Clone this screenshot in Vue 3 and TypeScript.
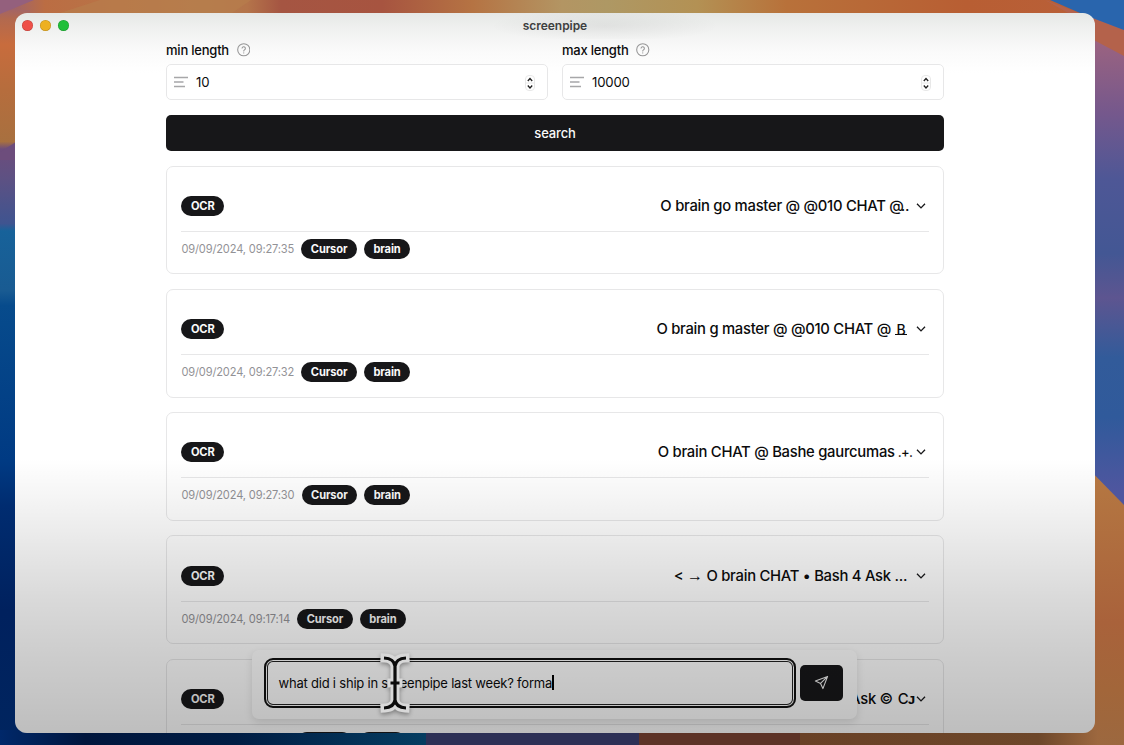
<script setup lang="ts">
interface Field {
  label: string
  value: string
}

interface Result {
  lead?: string
  title: string
  tail?: string
  tailKind?: string
  end: number
  date: string
  tags: string[]
}

const fields: Field[] = [
  { label: 'min length', value: '10' },
  { label: 'max length', value: '10000' },
]

const results: Result[] = [
  { title: 'O brain go master @ @010 CHAT @', tail: '..', tailKind: 'dots', end: 7, date: '09/09/2024, 09:27:35', tags: ['Cursor', 'brain'] },
  { title: 'O brain g master @ @010 CHAT @', tail: 'B', tailKind: 'slab', end: 9, date: '09/09/2024, 09:27:32', tags: ['Cursor', 'brain'] },
  { title: 'O brain CHAT @ Bashe gaurcumas', tail: '.+.', tailKind: 'plus', end: 4, date: '09/09/2024, 09:27:30', tags: ['Cursor', 'brain'] },
  { lead: '→', title: ' O brain CHAT • Bash 4 Ask ...', end: 9, date: '09/09/2024, 09:17:14', tags: ['Cursor', 'brain'] },
  { title: 'O brain CHAT • Bash 4 Ask ©', tail: 'Cᴊ', tailKind: 'cut', end: 2, date: '09/09/2024, 09:17:12', tags: ['Cursor', 'brain'] },
]
</script>

<template>
  <div class="desktop">
    <svg class="wallpaper" viewBox="0 0 1124 745" preserveAspectRatio="none">
      <defs>
        <linearGradient id="top" x1="0" x2="1" y1="0" y2="0">
          <stop offset="0" stop-color="#94607a" />
          <stop offset=".04" stop-color="#bb6d43" />
          <stop offset=".18" stop-color="#b57b4c" />
          <stop offset=".22" stop-color="#b4744a" />
          <stop offset=".25" stop-color="#a55542" />
          <stop offset=".34" stop-color="#a75440" />
          <stop offset=".42" stop-color="#b57343" />
          <stop offset=".5" stop-color="#b39563" />
          <stop offset=".54" stop-color="#ae9864" />
          <stop offset=".62" stop-color="#b39154" />
          <stop offset=".7" stop-color="#b8713a" />
          <stop offset=".86" stop-color="#b85e33" />
          <stop offset="1" stop-color="#b9603a" />
        </linearGradient>
        <linearGradient id="left" x1="0" x2="0" y1="0" y2="745" gradientUnits="userSpaceOnUse">
          <stop offset="0" stop-color="#94607d" />
          <stop offset=".025" stop-color="#b2694f" />
          <stop offset=".06" stop-color="#c86c3d" />
          <stop offset=".12" stop-color="#b66d3d" />
          <stop offset=".19" stop-color="#a8703f" />
          <stop offset=".2" stop-color="#6d4d7c" />
          <stop offset=".24" stop-color="#5d5183" />
          <stop offset=".3" stop-color="#3f5490" />
          <stop offset=".31" stop-color="#17629a" />
          <stop offset=".39" stop-color="#195b92" />
          <stop offset=".41" stop-color="#074b8c" />
          <stop offset=".62" stop-color="#003a83" />
          <stop offset=".68" stop-color="#002c70" />
          <stop offset=".82" stop-color="#00215e" />
          <stop offset="1" stop-color="#00255f" />
        </linearGradient>
        <linearGradient id="right" x1="0" x2="0" y1="0" y2="745" gradientUnits="userSpaceOnUse">
          <stop offset="0" stop-color="#2965ad" />
          <stop offset=".055" stop-color="#9b6380" />
          <stop offset=".15" stop-color="#76588c" />
          <stop offset=".24" stop-color="#4e5796" />
          <stop offset=".34" stop-color="#435794" />
          <stop offset=".4" stop-color="#5d5590" />
          <stop offset=".48" stop-color="#325b9a" />
          <stop offset=".56" stop-color="#305a9b" />
          <stop offset=".66" stop-color="#4f569f" />
        </linearGradient>
        <linearGradient id="rightWarm" x1="0" x2="0" y1="470" y2="745" gradientUnits="userSpaceOnUse">
          <stop offset="0" stop-color="#b57842" />
          <stop offset=".55" stop-color="#a9623b" />
          <stop offset=".8" stop-color="#a2663a" />
          <stop offset="1" stop-color="#9c683f" />
        </linearGradient>
        <linearGradient id="bottomBlue" x1="0" x2="1" y1="0" y2="0">
          <stop offset="0" stop-color="#00286a" />
          <stop offset=".2" stop-color="#00163d" />
          <stop offset=".55" stop-color="#001d44" />
          <stop offset="1" stop-color="#053d61" />
        </linearGradient>
        <linearGradient id="bottomWarm" x1="0" x2="1" y1="0" y2="0">
          <stop offset="0" stop-color="#694126" />
          <stop offset=".8" stop-color="#6d472a" />
          <stop offset="1" stop-color="#9d683f" />
        </linearGradient>
      </defs>
      <rect width="1124" height="20" fill="url(#top)" />
      <path d="M100 0H251L232 13H60Z" fill="#b77e4d" opacity=".6" />
      <rect y="10" width="30" height="735" fill="url(#left)" />
      <path d="M0 0H34L0 14Z" fill="#94607d" />
      <path d="M0 152L16 142V160H0Z" fill="#6d4d7c" />
      <rect x="1080" y="12" width="44" height="500" fill="url(#right)" />
      <path d="M1045 0L1124 30V56L1090 38V14H1070Z" fill="#b4624b" />
      <path d="M1050 0H1124V30L1080 13Z" fill="#2965ad" />
      <path d="M1080 460L1124 505V745H1080Z" fill="url(#rightWarm)" />
      <rect y="730" width="427" height="15" fill="url(#bottomBlue)" />
      <rect x="426" y="730" width="214" height="15" fill="#2d3056" />
      <rect x="639" y="730" width="162" height="15" fill="#5d3327" />
      <rect x="800" y="730" width="298" height="15" fill="url(#bottomWarm)" />
    </svg>

    <main class="window">
      <header class="titlebar">
        <div class="lights">
          <i class="light red"></i><i class="light yellow"></i><i class="light green"></i>
        </div>
        <span class="app-name">screenpipe</span>
      </header>

      <section class="content">
        <div class="fields">
          <div v-for="field in fields" :key="field.label" class="field">
            <div class="label">
              <span class="label-text">{{ field.label }}</span>
              <svg class="help" viewBox="0 0 24 24">
                <circle cx="12" cy="12" r="10.8" />
                <path d="M9 9a3 3 0 0 1 5.9 1c0 2-2.9 2.4-2.9 4M12 17.4v.3" />
              </svg>
            </div>
            <div class="input">
              <svg class="lines" viewBox="0 0 14 12"><path d="M0 1.5H14M0 6H9.5M0 10.5H11" /></svg>
              <span class="value">{{ field.value }}</span>
              <svg class="stepper" viewBox="0 0 10 16">
                <rect x=".5" y=".5" width="9" height="15" rx="3.5" />
                <path class="rule" d="M.5 8H9.5" />
                <path class="arrow" d="M2.800 6L5 3.500L7.200 6M2.800 10.500L5 13L7.200 10.500" />
              </svg>
            </div>
          </div>
        </div>

        <button class="search">search</button>

        <article v-for="item in results" :key="item.date" class="card">
          <div class="summary">
            <span class="pill">OCR</span>
            <div class="heading">
              <span class="title"><template v-if="item.lead">&lt; <span class="arrow-glyph">{{ item.lead }}</span></template>{{ item.title }}</span>
              <span v-if="item.tail" class="tail" :class="item.tailKind">{{ item.tail }}</span>
              <svg class="chevron" viewBox="0 0 10 6" :style="{ marginLeft: item.end + 'px' }"><path d="M1 .7L5 4.9L9 .7" /></svg>
            </div>
          </div>
          <div class="meta">
            <time>{{ item.date }}</time>
            <span v-for="tag in item.tags" :key="tag" class="pill">{{ tag }}</span>
          </div>
        </article>
      </section>

      <div class="composer">
        <div class="prompt"><span class="prompt-text">what did i ship in screenpipe last week? forma</span><i class="caret"></i></div>
        <button class="send">
          <svg viewBox="0 0 16 16"><path d="M14.5 1.5L1.5 6.5L7 9L9.5 14.5ZM14.5 1.5L7 9" /></svg>
        </button>
      </div>

      <div class="shade"></div>

      <svg class="cursor" viewBox="0 0 32 58">
        <path class="outline" d="M6 4Q15 4.500 16 12Q17 4.500 26 4M16 11V47M6 54Q15 53.500 16 46Q17 53.500 26 54" />
        <path class="outline" d="M13 29H19" />
        <path class="core" d="M5 4Q15 4.500 16 12Q17 4.500 27 4M16 11V47M5 54Q15 53.500 16 46Q17 53.500 27 54M11.500 29H20.500" />
      </svg>
    </main>
  </div>
</template>

<style>
body { margin: 0; overflow: hidden; }
</style>

<style scoped>
* { box-sizing: border-box; }
.desktop {
  position: relative;
  width: 1124px;
  height: 745px;
  padding: 13px 29px 12px 15px;
  overflow: hidden;
  background: #194f87;
  font-family: Inter, "Liberation Sans", sans-serif;
  color: #0b0b0c;
}
.wallpaper { position: absolute; inset: 0; width: 100%; height: 100%; }
.window {
  position: relative;
  width: 1080px;
  height: 720px;
  border-radius: 12px;
  overflow: hidden;
  background: linear-gradient(#e6e8e6 0, #f1f2f1 18px, #fafafa 38px, #fff 60px);
}
.desktop::before {
  content: "";
  position: absolute;
  left: 15px;
  top: 24px;
  width: 1080px;
  height: 709px;
  border-radius: 12px;
  box-shadow: 0 0 10px rgba(0, 0, 0, .28);
}
.titlebar {
  height: 26px;
  padding-bottom: 1px;
  display: grid;
  grid-template-columns: 100px 1fr 100px;
  align-items: center;
  background: radial-gradient(ellipse 115px 16px at 590px 13px, rgba(0, 0, 0, .06), transparent);
}
.lights { display: flex; gap: 7px; padding-left: 7px; }
.light { width: 11px; height: 11px; border-radius: 50%; box-shadow: inset 0 0 0 .5px rgba(0, 0, 0, .2); }
.red { background: #ee5048; }
.yellow { background: #edb021; }
.green { background: #1fbf38; }
.app-name { text-align: center; font-size: 12px; font-weight: 600; color: #3e3f3f; letter-spacing: -.05px; }
.content { width: 778px; margin: 0 auto 0 151px; }
.fields { display: grid; grid-template-columns: 1fr 1fr; gap: 14px; }
.label { height: 26px; padding-top: 2px; display: flex; align-items: center; gap: 8px; margin-top: -3px; margin-bottom: 3px; }
.label-text { font-size: 13px; font-weight: 550; letter-spacing: -.22px; }
.help { width: 13.5px; height: 13.5px; fill: none; stroke: #969697; stroke-width: 1.9; stroke-linecap: round; }
.input {
  height: 36px;
  margin-top: -1px;
  display: flex;
  align-items: center;
  border: 1px solid #e7e7e8;
  border-radius: 5px;
  background: #fff;
  padding: 0 12.5px 0 7px;
}
.lines { width: 14px; height: 12px; fill: none; stroke: #a7a7a9; stroke-width: 1.3; }
.value { margin-left: 8px; flex: 1; font-size: 13.2px; letter-spacing: -.2px; }
.stepper { width: 10px; height: 16px; margin-top: 1px; fill: none; }
.stepper rect, .rule { stroke: #e8e8e8; stroke-width: 1; }
.arrow { stroke: #222; stroke-width: 1.3; }
.search {
  display: block;
  width: 100%;
  height: 36px;
  margin: 15px 0 14.5px;
  padding: 0;
  border: 0;
  border-radius: 5px;
  background: #171719;
  color: #fafafa;
  font: 550 13px Inter, sans-serif;
  letter-spacing: -.15px;
}
.card {
  height: 108.8px;
  margin-bottom: 14.5px;
  padding: 29.4px 14.3px 0 14.4px;
  border: 1px solid #e7e7e8;
  border-radius: 7px;
}
.summary { height: 36px; display: flex; justify-content: space-between; align-items: flex-start; border-bottom: 1px solid #e7e7e8; }
.pill {
  height: 20px;
  display: inline-flex;
  align-items: center;
  padding: 0 9.5px;
  border-radius: 10px;
  background: #171719;
  color: #fafafa;
  font-size: 11.1px;
  font-weight: 700;
  letter-spacing: -.12px;
}
.heading { height: 20px; display: flex; align-items: center; padding-right: 3px; font-size: 14.8px; font-weight: 550; white-space: pre; }
.title { letter-spacing: -.26px; }
.arrow-glyph { font-family: "Liberation Sans", sans-serif; font-size: 16px; line-height: 1; }
.chevron { width: 10px; height: 6px; fill: none; stroke: #171719; stroke-width: 1.3; margin-right: -.5px; }
.dots { margin-left: -3px; letter-spacing: -.2px; }
.slab { margin-left: 4px; padding: 0 1.5px; font-size: 14px; line-height: 11px; height: 11px; border-bottom: 1.5px solid currentColor; }
.plus { margin-left: 3px; font-size: 13px; letter-spacing: -.7px; }
.cut { margin-left: 5px; letter-spacing: -1px; }
.meta { height: 34px; display: flex; align-items: center; gap: 7.2px; }
time { font-size: 11.1px; color: #929296; letter-spacing: -.15px; }
.composer {
  position: absolute;
  left: 237px;
  top: 637px;
  width: 605px;
  height: 69px;
  display: flex;
  align-items: center;
  gap: 4px;
  padding: 0 14px 4px 12px;
  border-radius: 7px;
  background: #fff;
  box-shadow: 0 3px 8px rgba(0, 0, 0, .12);
}
.prompt {
  width: 532px;
  height: 50px;
  display: flex;
  align-items: center;
  padding-left: 12.5px;
  border: 2px solid #111;
  border-radius: 9px;
  box-shadow: inset 0 0 0 1px #fff, inset 0 0 0 2px #222;
  font-size: 13px;
}
.prompt-text { letter-spacing: -.21px; }
.caret { width: 1.5px; height: 15px; background: #000; }
.send { width: 43px; height: 36px; display: grid; place-items: center; padding: 0; border: 0; border-radius: 5px; background: #171719; }
.send svg { width: 15px; height: 15px; fill: none; stroke: #f0f0f0; stroke-width: 1.2; stroke-linejoin: round; }
.shade {
  position: absolute;
  inset: 445px 0 0;
  background: linear-gradient(rgba(0, 0, 0, 0), rgba(0, 0, 0, .07) 68px, rgba(0, 0, 0, .15) 142px, rgba(0, 0, 0, .2) 200px, rgba(0, 0, 0, .255));
  pointer-events: none;
}
.cursor { position: absolute; left: 364px; top: 641px; width: 32px; height: 58px; fill: none; overflow: visible; filter: drop-shadow(0 2px 2px rgba(0, 0, 0, .35)); }
.outline { stroke: #d8d8d8; stroke-width: 9; stroke-linecap: square; }
.core { stroke: #0b0b0b; stroke-width: 3.2; }
</style>
